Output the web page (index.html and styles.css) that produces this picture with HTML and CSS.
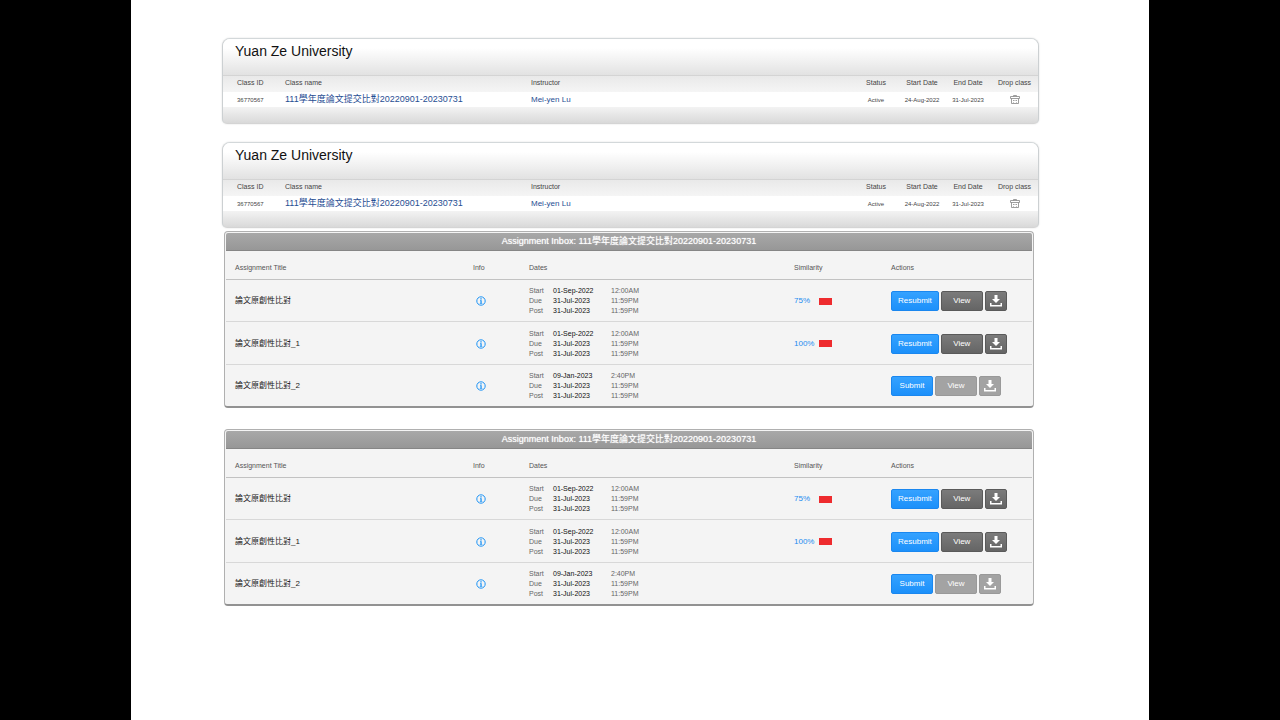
FILE: index.html
```html
<!DOCTYPE html>
<html lang="zh-Hant">
<head>
<meta charset="utf-8">
<title>Yuan Ze University</title>
<link rel="stylesheet" href="styles.css">
</head>
<body>
<svg class="sprite" aria-hidden="true">
  <symbol id="trash" viewBox="0 0 10 10">
    <path d="M3.500 1.500V.5h3v1M.5 1.500h9v2h-9z" fill="none" stroke="#858585" stroke-width=".8"/>
    <path d="M1.500 3.500v5h7v-5M3.500 5v1M5 5v1M6.500 5v1M3.500 7v.6M6.500 7v.6" fill="none" stroke="#858585" stroke-width=".8"/>
  </symbol>
  <symbol id="info" viewBox="0 0 10 10">
    <circle cx="5" cy="5" r="4.200" fill="none" stroke="#1c93f5" stroke-width="1"/>
    <path d="M4.300 2.200h1.400v1.200H4.300zM4 4.200h1.700v2.900h.6v.7H3.800v-.7h.6V4.900H4z" fill="#1c93f5"/>
  </symbol>
  <symbol id="download" viewBox="0 0 12 12">
    <path d="M4.500 0h3v4H10L6 8 2 4h2.500zM0 8h1.500v2h9V8H12v3.500H0z" fill="#fff"/>
  </symbol>
</svg>
<main class="sheet">
  <section class="class-panel">
    <h2 class="school">Yuan Ze University</h2>
    <table class="classes">
      <colgroup><col class="c-id"><col class="c-name"><col><col class="c-small"><col class="c-small"><col class="c-small"><col class="c-drop"></colgroup>
      <thead><tr><th>Class ID</th><th>Class name</th><th>Instructor</th><th>Status</th><th>Start Date</th><th>End Date</th><th>Drop class</th></tr></thead>
      <tbody><tr><td>36770567</td><td><a class="class-link" href="#">111學年度論文提交比對20220901-20230731</a></td><td><a class="teacher" href="#">Mei-yen Lu</a></td><td>Active</td><td>24-Aug-2022</td><td>31-Jul-2023</td><td><button class="icon-button" aria-label="Drop class"><svg class="icon"><use href="#trash"/></svg></button></td></tr></tbody>
    </table>
  </section>

  <section class="class-panel">
    <h2 class="school">Yuan Ze University</h2>
    <table class="classes">
      <colgroup><col class="c-id"><col class="c-name"><col><col class="c-small"><col class="c-small"><col class="c-small"><col class="c-drop"></colgroup>
      <thead><tr><th>Class ID</th><th>Class name</th><th>Instructor</th><th>Status</th><th>Start Date</th><th>End Date</th><th>Drop class</th></tr></thead>
      <tbody><tr><td>36770567</td><td><a class="class-link" href="#">111學年度論文提交比對20220901-20230731</a></td><td><a class="teacher" href="#">Mei-yen Lu</a></td><td>Active</td><td>24-Aug-2022</td><td>31-Jul-2023</td><td><button class="icon-button" aria-label="Drop class"><svg class="icon"><use href="#trash"/></svg></button></td></tr></tbody>
    </table>
  </section>

  <div class="inboxes">
    <section class="inbox">
      <h3 class="inbox-title">Assignment Inbox: 111學年度論文提交比對20220901-20230731</h3>
      <table class="assignments">
        <colgroup><col class="a-title"><col class="a-info"><col><col class="a-sim"><col class="a-act"></colgroup>
        <thead><tr><th>Assignment Title</th><th>Info</th><th>Dates</th><th>Similarity</th><th>Actions</th></tr></thead>
        <tbody>
          <tr>
            <td>論文原創性比對</td>
            <td><button class="icon-button info" aria-label="Info"><svg class="icon"><use href="#info"/></svg></button></td>
            <td><div class="dates"><span>Start</span><b>01-Sep-2022</b><span>12:00AM</span><span>Due</span><b>31-Jul-2023</b><span>11:59PM</span><span>Post</span><b>31-Jul-2023</b><span>11:59PM</span></div></td>
            <td><div class="score"><a href="#">75%</a><i></i></div></td>
            <td><div class="actions"><button class="btn primary">Resubmit</button><button class="btn">View</button><button class="btn download" aria-label="Download"><svg><use href="#download"/></svg></button></div></td>
          </tr>
          <tr>
            <td>論文原創性比對_1</td>
            <td><button class="icon-button info" aria-label="Info"><svg class="icon"><use href="#info"/></svg></button></td>
            <td><div class="dates"><span>Start</span><b>01-Sep-2022</b><span>12:00AM</span><span>Due</span><b>31-Jul-2023</b><span>11:59PM</span><span>Post</span><b>31-Jul-2023</b><span>11:59PM</span></div></td>
            <td><div class="score"><a href="#">100%</a><i></i></div></td>
            <td><div class="actions"><button class="btn primary">Resubmit</button><button class="btn">View</button><button class="btn download" aria-label="Download"><svg><use href="#download"/></svg></button></div></td>
          </tr>
          <tr>
            <td>論文原創性比對_2</td>
            <td><button class="icon-button info" aria-label="Info"><svg class="icon"><use href="#info"/></svg></button></td>
            <td><div class="dates"><span>Start</span><b>09-Jan-2023</b><span>2:40PM</span><span>Due</span><b>31-Jul-2023</b><span>11:59PM</span><span>Post</span><b>31-Jul-2023</b><span>11:59PM</span></div></td>
            <td></td>
            <td><div class="actions"><button class="btn primary">Submit</button><button class="btn" disabled>View</button><button class="btn download" disabled aria-label="Download"><svg><use href="#download"/></svg></button></div></td>
          </tr>
        </tbody>
      </table>
    </section>

    <section class="inbox">
      <h3 class="inbox-title">Assignment Inbox: 111學年度論文提交比對20220901-20230731</h3>
      <table class="assignments">
        <colgroup><col class="a-title"><col class="a-info"><col><col class="a-sim"><col class="a-act"></colgroup>
        <thead><tr><th>Assignment Title</th><th>Info</th><th>Dates</th><th>Similarity</th><th>Actions</th></tr></thead>
        <tbody>
          <tr>
            <td>論文原創性比對</td>
            <td><button class="icon-button info" aria-label="Info"><svg class="icon"><use href="#info"/></svg></button></td>
            <td><div class="dates"><span>Start</span><b>01-Sep-2022</b><span>12:00AM</span><span>Due</span><b>31-Jul-2023</b><span>11:59PM</span><span>Post</span><b>31-Jul-2023</b><span>11:59PM</span></div></td>
            <td><div class="score"><a href="#">75%</a><i></i></div></td>
            <td><div class="actions"><button class="btn primary">Resubmit</button><button class="btn">View</button><button class="btn download" aria-label="Download"><svg><use href="#download"/></svg></button></div></td>
          </tr>
          <tr>
            <td>論文原創性比對_1</td>
            <td><button class="icon-button info" aria-label="Info"><svg class="icon"><use href="#info"/></svg></button></td>
            <td><div class="dates"><span>Start</span><b>01-Sep-2022</b><span>12:00AM</span><span>Due</span><b>31-Jul-2023</b><span>11:59PM</span><span>Post</span><b>31-Jul-2023</b><span>11:59PM</span></div></td>
            <td><div class="score"><a href="#">100%</a><i></i></div></td>
            <td><div class="actions"><button class="btn primary">Resubmit</button><button class="btn">View</button><button class="btn download" aria-label="Download"><svg><use href="#download"/></svg></button></div></td>
          </tr>
          <tr>
            <td>論文原創性比對_2</td>
            <td><button class="icon-button info" aria-label="Info"><svg class="icon"><use href="#info"/></svg></button></td>
            <td><div class="dates"><span>Start</span><b>09-Jan-2023</b><span>2:40PM</span><span>Due</span><b>31-Jul-2023</b><span>11:59PM</span><span>Post</span><b>31-Jul-2023</b><span>11:59PM</span></div></td>
            <td></td>
            <td><div class="actions"><button class="btn primary">Submit</button><button class="btn" disabled>View</button><button class="btn download" disabled aria-label="Download"><svg><use href="#download"/></svg></button></div></td>
          </tr>
        </tbody>
      </table>
    </section>
  </div>
</main>
</body>
</html>
```
FILE: styles.css
```css
* { box-sizing: border-box; }

body {
  margin: 0;
  background: #000;
  color: #222;
  font: 7px/10px "Liberation Sans", "Noto Sans CJK TC", sans-serif;
}

button { font: inherit; cursor: pointer; }
a { text-decoration: none; }
.sprite { display: none; }

.sheet {
  min-height: 100vh;
  margin: 0 131px;
  padding: 38px 110px 40px 91px;
  background: #fff;
}

table { width: 100%; table-layout: fixed; border-spacing: 0; }
th, td { padding: 0; font-weight: 400; text-align: left; vertical-align: middle; white-space: nowrap; }

.class-panel {
  margin-bottom: 18px;
  padding-bottom: 16px;
  border: 1px solid #ccd0d2;
  border-top-color: #d3d8da;
  border-bottom-color: #d4d4d4;
  border-radius: 8px 8px 5px 5px;
  background: linear-gradient(#f3f3f3, #d9d9d9) bottom / 100% 16px no-repeat #fff;
  box-shadow: 0 0 2px #ddd;
}
.class-panel:nth-of-type(2) { margin-bottom: 3px; }

.school {
  height: 36px;
  margin: 0;
  padding: 3px 12px;
  border-radius: 7px 7px 0 0;
  background: linear-gradient(#fff 25%, #e2e2e2);
  color: #111;
  font-size: 14px;
  font-weight: 400;
  line-height: 18px;
}

.c-id { width: 62px; }
.c-name { width: 246px; }
.c-small { width: 46px; }
.c-drop { width: 47px; }

.classes th {
  height: 17px;
  padding-bottom: 2px;
  border-top: 1px solid #d4d4d4;
  background: linear-gradient(#e9e9e9, #f5f5f5);
  color: #444;
}
.classes td { height: 15px; background: #fff; color: #444; font-size: 6px; }
.classes th:first-child, .classes td:first-child { padding-left: 14px; }
.classes th:nth-child(n+4), .classes td:nth-child(n+4) { text-align: center; }
.class-link { color: #1f4e93; font-size: 9px; }
.teacher { color: #1f4e93; font-size: 8px; }

.icon-button { display: block; margin: 0 auto; padding: 0; border: 0; background: none; }
.icon { display: block; width: 10px; height: 10px; }
.icon-button.info { margin: 0 3px; }

.inboxes { display: grid; gap: 21px; padding: 0 5px 0 2px; }

.inbox {
  padding: 1px;
  border: 1px solid #b0b0b0;
  border-bottom: 2px solid #929292;
  border-radius: 4px;
  background: #f4f4f4;
}

.inbox-title {
  margin: 0;
  border-bottom: 1px solid #868686;
  border-radius: 2px 2px 0 0;
  background: linear-gradient(#a8a8a8, #979797);
  color: #fff;
  font-size: 9px;
  font-weight: 400;
  line-height: 17px;
  text-align: center;
  text-shadow: 0 0 1px #eee;
}

.a-title { width: 247px; }
.a-info { width: 56px; }
.a-sim { width: 97px; }
.a-act { width: 141px; }

.assignments th { height: 29px; padding-top: 5px; border-bottom: 1px solid #c2c2c2; color: #555; }
.assignments td { height: 42px; padding-top: 1px; border-bottom: 1px solid #d8d8d8; }
.assignments tr:nth-child(2) td { height: 43px; }
.assignments tr:last-child td { height: 40px; border-bottom: 0; }
.assignments th:first-child, .assignments td:first-child { padding-left: 9px; }
.assignments td:first-child { font-size: 8px; }

.dates { display: grid; grid-template-columns: 24px 58px auto; color: #666; }
.dates b { color: #111; font-weight: 400; }

.score { display: flex; align-items: center; color: #1c8cf0; font-size: 8px; }
.score a { width: 25px; color: inherit; }
.score i { width: 13px; height: 7px; background: #ee2b2e; }

.actions { display: flex; gap: 2px; }
.btn {
  display: flex;
  align-items: center;
  justify-content: center;
  min-width: 42px;
  height: 20px;
  padding: 0 6px;
  border: 1px solid #5a5a5a;
  border-radius: 2px;
  background: linear-gradient(#7b7b7b, #656565);
  color: #fff;
  font-size: 8px;
}
.btn.primary { border-color: #1a87ef; background: linear-gradient(#35a2ff, #1c90fa); }
.btn.download { min-width: 22px; padding: 0; }
.btn.download svg { width: 12px; height: 12px; }
.btn:disabled { border-color: #999; background: #a3a3a3; }
```
